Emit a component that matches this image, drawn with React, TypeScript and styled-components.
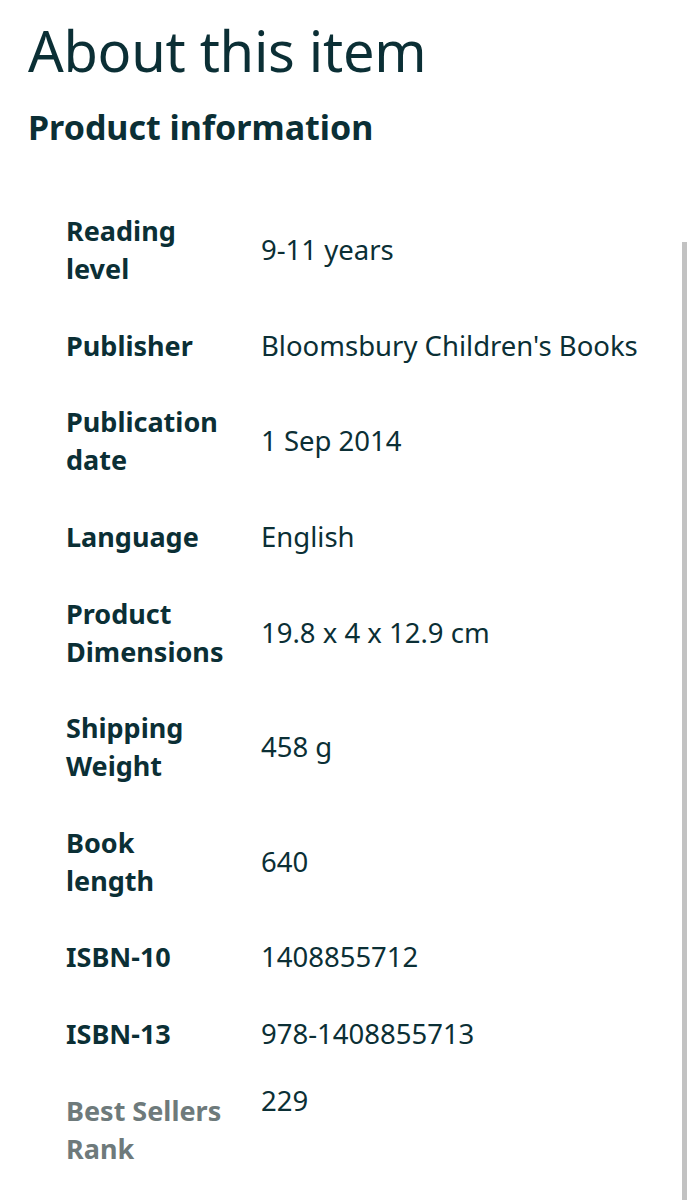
import styled, { createGlobalStyle } from "styled-components";

const GlobalStyle = createGlobalStyle`
  html, body {
    margin: 0;
    padding: 0;
    background: #ffffff;
  }
  body {
    font-family: "Noto Sans", "Open Sans", sans-serif;
    color: #0b2f35;
  }
`;

const Page = styled.div`
  position: relative;
  width: 687px;
  height: 1200px;
  overflow: hidden;
  padding: 18px 0 0 28px;
  box-sizing: border-box;
`;

const Title = styled.h1`
  margin: 0;
  font-size: 56px;
  font-weight: 400;
  line-height: 64px;
  letter-spacing: -0.3px;
`;

const Subtitle = styled.h2`
  margin: 23px 0 0;
  font-size: 34px;
  font-weight: 700;
  line-height: 44px;
`;

const Table = styled.table`
  margin: 44px 0 0 19px;
  border-collapse: collapse;
`;

const Row = styled.tr``;

const Label = styled.th<{ $faded?: boolean }>`
  width: 160px;
  padding: 19.3px 35px 19.3px 19px;
  text-align: left;
  vertical-align: middle;
  font-size: 27px;
  font-weight: 700;
  line-height: 38px;
  color: ${(p) => (p.$faded ? "#6e7a7b" : "#0b2f35")};
`;

const Value = styled.td<{ $top?: boolean }>`
  padding: ${(p) => (p.$top ? "10px 0 19px" : "19.3px 0")};
  vertical-align: ${(p) => (p.$top ? "top" : "middle")};
  font-size: 27.5px;
  font-weight: 400;
  line-height: 38px;
  white-space: nowrap;
`;

const ScrollThumb = styled.div`
  position: absolute;
  right: 0;
  top: 242px;
  bottom: 0;
  width: 5px;
  background: #c2c2c2;
`;

const rows: [string, string][] = [
  ["Reading level", "9-11 years"],
  ["Publisher", "Bloomsbury Children's Books"],
  ["Publication date", "1 Sep 2014"],
  ["Language", "English"],
  ["Product Dimensions", "19.8 x 4 x 12.9 cm"],
  ["Shipping Weight", "458 g"],
  ["Book length", "640"],
  ["ISBN-10", "1408855712"],
  ["ISBN-13", "978-1408855713"],
];

export default function App() {
  return (
    <>
      <GlobalStyle />
      <Page>
        <Title>About this item</Title>
        <Subtitle>Product information</Subtitle>
        <Table>
          <tbody>
            {rows.map(([k, v]) => (
              <Row key={k}>
                <Label>{k}</Label>
                <Value>{v}</Value>
              </Row>
            ))}
            <Row>
              <Label $faded>Best Sellers Rank</Label>
              <Value $top>229</Value>
            </Row>
          </tbody>
        </Table>
        <ScrollThumb />
      </Page>
    </>
  );
}
